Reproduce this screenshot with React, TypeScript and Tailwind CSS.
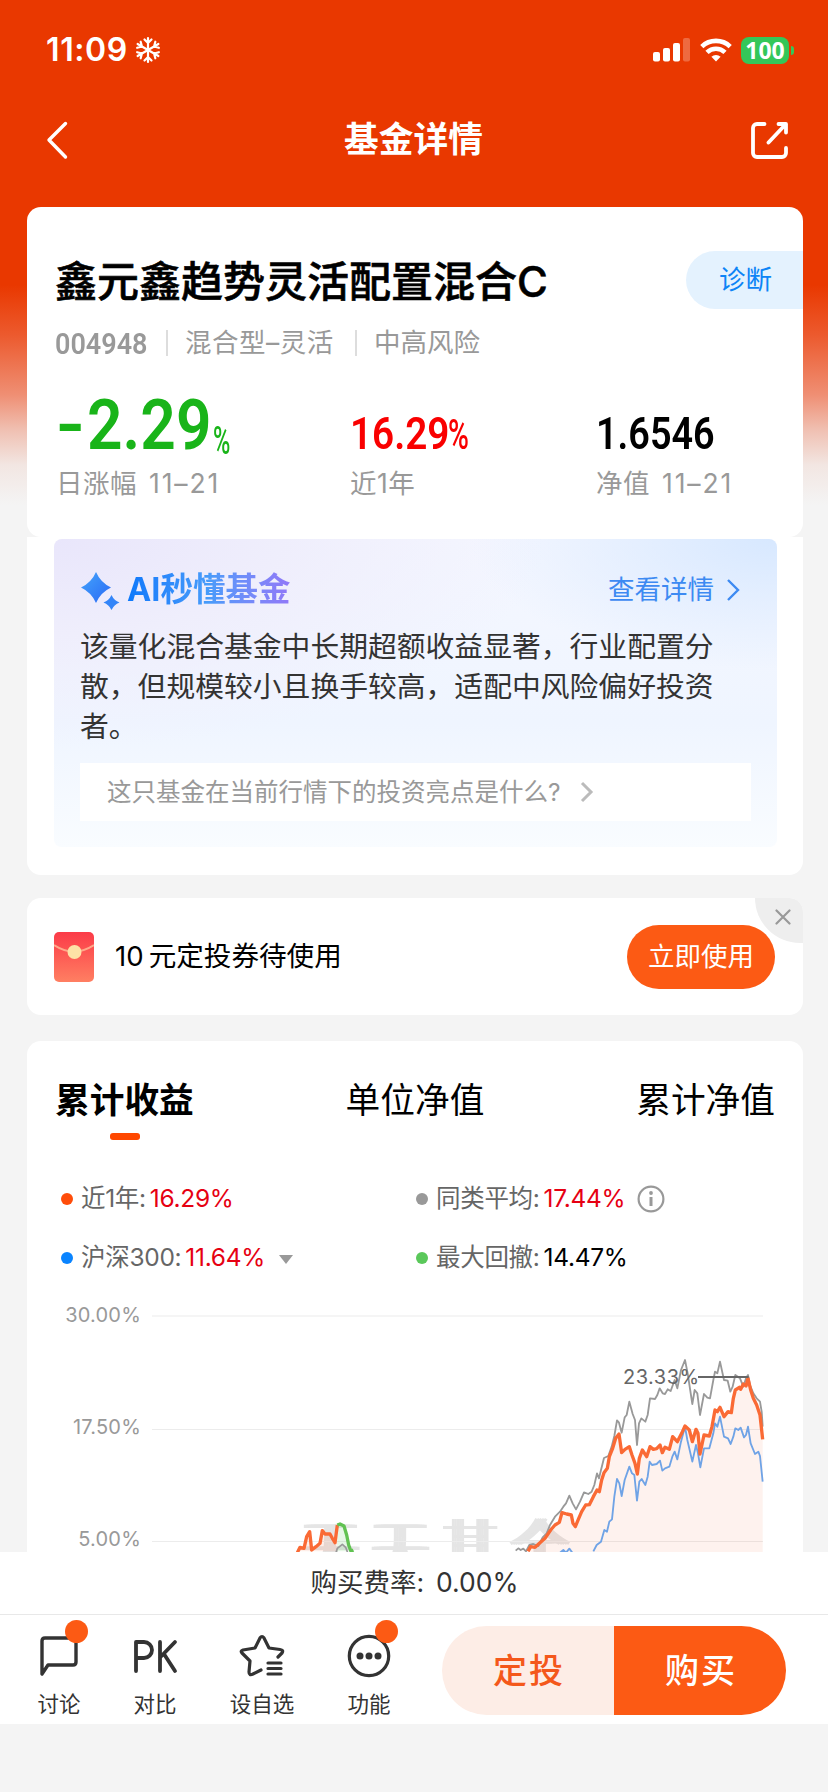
import type { ReactNode } from "react";

const CJK = "font-['Inter','Noto_Sans_CJK_SC',sans-serif]";
const DIN = "font-['Roboto','Noto_Sans_CJK_SC',sans-serif]";

const GRAY_LINE =
  "47,662 55,655 62,660 70,656 78,664 88,645 100,642 115,648 128,622 140,610 150,585 165,560 180,545 190,530 198,520 208,497 218,520 228,538 240,515 252,487 265,492 275,485 283,465 291,430 297,445 303,420 312,384 325,378 335,350 343,318 351,271 357,278 365,308 374,262 380,255 388,215 398,252 405,270 411,345 417,280 424,265 436,275 443,255 450,205 465,207 472,195 479,175 488,190 495,192 503,178 512,183 524,150 532,175 543,120 555,90 563,130 577,222 584,180 592,190 600,255 612,192 622,203 630,205 640,150 645,125 652,130 660,95 672,150 683,152 691,185 698,170 706,135 720,145 730,170 738,145 744,135 750,165 760,190 770,205 780,215 785,245 788,290";
const FUND_LINE =
  "84,664 92,650 105,652 120,638 135,625 152,600 165,585 178,577 186,548 200,552 214,555 219,580 226,590 235,568 245,545 257,525 268,524 280,500 291,480 298,485 305,450 312,428 322,415 328,380 338,355 347,325 357,312 365,368 375,358 388,350 396,375 405,400 412,432 418,385 427,360 440,380 450,350 460,358 470,356 480,345 487,368 495,352 508,358 518,320 532,335 545,310 555,288 568,300 577,335 588,298 594,310 600,372 612,315 628,318 636,290 645,240 652,245 660,232 672,260 684,245 694,248 700,205 706,180 718,172 722,178 730,162 738,168 744,145 752,180 760,205 770,225 780,255 788,328";
const INDEX_LINE =
  "280,664 290,645 303,635 313,600 321,605 328,575 336,568 343,500 351,447 358,460 365,498 374,450 388,410 396,430 403,435 411,512 418,455 425,447 436,465 443,440 449,395 456,405 470,402 480,392 487,422 495,415 508,410 517,380 524,365 532,388 543,335 555,290 562,330 577,395 588,345 594,370 601,412 612,355 628,355 640,310 645,280 652,290 660,260 672,320 684,325 692,342 700,320 706,295 715,300 722,293 732,322 738,315 744,290 752,340 765,372 775,365 780,378 788,455";

function StatusBar() {
  return (
    <div className="flex h-[100px] items-center pl-[46px] pr-[34px] text-white">
      <span className="text-[32px] font-semibold tracking-[0.6px]">11:09</span>
      <svg className="ml-[7px]" width="26" height="28" viewBox="-13 -14 26 28" fill="none" stroke="#fff" strokeWidth="2.2" strokeLinecap="round">
        {[0, 60, 120, 180, 240, 300].map((a) => (
          <path key={a} transform={`rotate(${a})`} d="M0 0V-12M-3.500-10.500L0-7L3.500-10.500" />
        ))}
      </svg>
      <svg className="ml-auto" width="38" height="24" viewBox="0 0 38 24" fill="#fff">
        <rect x="0" y="14" width="7" height="9.5" rx="2" />
        <rect x="10" y="10" width="7" height="13.5" rx="2" />
        <rect x="20" y="5" width="7" height="18.5" rx="2" />
        <rect x="30" y="0" width="7" height="23.5" rx="2" opacity=".25" />
      </svg>
      <svg className="ml-[9px]" width="32" height="24" viewBox="0 0 32 24" fill="none" stroke="#fff" strokeWidth="4.6">
        <path d="M1.8 8.6a20.5 20.5 0 0 1 28.4 0" />
        <path d="M7 14.4a13 13 0 0 1 18 0" />
        <path d="M16 23.6l-4.6-4.8a6.6 6.6 0 0 1 9.2 0z" fill="#fff" stroke="none" />
      </svg>
      <div className="ml-[9px] flex h-[27px] w-[48px] items-center justify-center rounded-[8px] bg-[#34c759] font-['Open_Sans',sans-serif] text-[23px] font-bold leading-none">100</div>
      <div className="ml-[2px] h-[9px] w-[3px] rounded-r-full bg-[#34c759]" />
    </div>
  );
}

function NavBar() {
  return (
    <div className="flex h-[107px] items-center justify-between pb-[28px] pl-[45px] pr-[40px]">
      <svg width="24" height="40" viewBox="0 0 24 40" fill="none" stroke="#fff" strokeWidth="3.4" strokeLinecap="round" strokeLinejoin="round">
        <path d="M20.500 3.500L4 20L20.500 37" />
      </svg>
      <h1 className="ml-[7px] text-[34.7px] font-bold leading-none text-white">基金详情</h1>
      <svg width="37" height="38" viewBox="0 0 37 38" fill="none" stroke="#fff" strokeWidth="3.8" strokeLinecap="round" strokeLinejoin="round">
        <path d="M13.500 3H6a4 4 0 0 0-4 4V32a4 4 0 0 0 4 4H31a4 4 0 0 0 4-4V27" />
        <path d="M27.500 3H35V11.500M34.500 3.500L17.500 21.500" />
      </svg>
    </div>
  );
}

function Stat({ className, label, date, children }: { className: string; label: string; date?: string; children: ReactNode }) {
  return (
    <div className={`shrink-0 ${className}`}>
      <div className={`flex h-[58px] items-end whitespace-nowrap ${DIN}`}>{children}</div>
      <div className="mt-[6px] whitespace-nowrap text-[26.5px] leading-[36px] tracking-[0.5px] text-[#999]">
        {label}
        {date && <span className="ml-[12px] tracking-[1.9px]">{date}</span>}
      </div>
    </div>
  );
}

function FundCard() {
  return (
    <section className="h-[330px] overflow-hidden rounded-[14px] bg-white pt-[44px]">
      <div className="flex h-[58px] items-center justify-between pl-[28px]">
        <h2 className="pt-[3px] text-[42px] font-medium leading-none text-black [-webkit-text-stroke:0.6px_#000]">鑫元鑫趋势灵活配置混合C</h2>
        <div className="flex h-[58px] w-[117px] items-center rounded-l-full bg-[#e4f2fe] pl-[33px] text-[26.5px] text-[#0d84f6]">诊断</div>
      </div>
      <div className="mt-[16px] flex h-[36px] items-center text-[26.5px] text-[#999]">
        <span className={`ml-[28px] w-[111px] origin-left scale-x-90 text-[30px] font-semibold ${DIN}`}>004948</span>
        <i className="h-[26px] w-[2px] bg-[#ddd]" />
        <span className="ml-[17px] w-[170px] tracking-[0.5px]">混合型–灵活</span>
        <i className="h-[26px] w-[2px] bg-[#ddd]" />
        <span className="ml-[17px]">中高风险</span>
      </div>
      <div className="mt-[40px] flex pl-[29px]">
        <Stat className="w-[294px]" label="日涨幅" date="11–21">
          <span className="w-[31px] origin-left scale-x-[1.12] text-[70px] font-semibold leading-[68px] text-[#19b419]">-</span>
          <span className="w-[126px] origin-left scale-x-[.89] text-[70px] font-semibold leading-[68px] text-[#19b419]">2.29</span>
          <span className="origin-left scale-x-[.62] text-[38px] font-medium leading-[36px] text-[#19b419]">%</span>
        </Stat>
        <Stat className="w-[246px]" label="近1年">
          <span className="w-[98px] origin-left scale-x-[.86] text-[45px] font-semibold leading-[50px] text-[#f90000]">16.29</span>
          <span className="origin-left scale-x-[.66] text-[43px] font-medium leading-[50px] text-[#f90000]">%</span>
        </Stat>
        <Stat className="" label="净值" date="11–21">
          <span className="origin-left scale-x-[.84] text-[45px] font-semibold leading-[50px] text-black">1.6546</span>
        </Stat>
      </div>
    </section>
  );
}

function AiCard() {
  return (
    <section className="h-[338px] rounded-b-[14px] bg-white pl-[27px] pr-[26px] pt-[2px]">
      <div className="h-[308px] rounded-[8px] bg-[radial-gradient(ellipse_at_100%_0%,#d7e8ff_0%,transparent_30%),radial-gradient(ellipse_at_0%_0%,#e9e6fb_0%,#efeefc_22%,transparent_48%),linear-gradient(180deg,#f5f7ff_0%,#eff5ff_60%,#f9fcff_100%)] px-[26px] pt-[32px]">
        <div className="flex h-[38px] items-center">
          <svg width="40" height="40" viewBox="0 0 40 40">
            <defs>
              <linearGradient id="spark" x1="0" y1="0" x2="1" y2="1">
                <stop offset="0" stopColor="#45a5fb" />
                <stop offset="1" stopColor="#2868f5" />
              </linearGradient>
            </defs>
            <path fill="url(#spark)" d="M16 2Q20.500 12.500 31 17.500Q20.500 22.500 16 33Q11.500 22.500 1 17.500Q11.500 12.500 16 2Z" />
            <path fill="#3385f8" d="M31.500 25Q34 30.500 39.500 32.500Q34 34.500 31.500 40Q29 34.500 23.500 32.500Q29 30.500 31.500 25Z" />
          </svg>
          <h3 className="ml-[7px] bg-gradient-to-r from-[#0a78fb] via-[#479bfa] to-[#9078f8] bg-clip-text text-[32.500px] font-bold leading-[38px] text-transparent">AI秒懂基金</h3>
          <span className="ml-auto text-[26.5px] text-[#3d8af2]">查看详情</span>
          <svg className="ml-[12px] mr-[11px]" width="14" height="24" viewBox="0 0 14 24" fill="none" stroke="#3d8af2" strokeWidth="2.4">
            <path d="M2 2L12 12L2 22" />
          </svg>
        </div>
        <p className="mt-[18px] w-[645px] text-[28.8px] leading-[40px] text-[#333]">该量化混合基金中长期超额收益显著，行业配置分散，但规模较小且换手较高，适配中风险偏好投资者。</p>
        <div className="mt-[16px] flex h-[58px] items-center bg-white pl-[27px] text-[24.5px] text-[#999]">
          这只基金在当前行情下的投资亮点是什么?
          <svg className="ml-[19px]" width="14" height="22" viewBox="0 0 14 22" fill="none" stroke="#bbb" strokeWidth="3">
            <path d="M2 2L11 11L2 20" />
          </svg>
        </div>
      </div>
    </section>
  );
}

function CouponCard() {
  return (
    <section className="relative mt-[23px] flex h-[117px] items-center overflow-hidden rounded-[14px] bg-white pl-[27px] pr-[28px]">
      <svg width="40" height="50" viewBox="0 0 40 50">
        <defs>
          <linearGradient id="packet" x1="0" y1="0" x2="0" y2="1">
            <stop offset="0" stopColor="#fb3b48" />
            <stop offset="1" stopColor="#ff7f62" />
          </linearGradient>
        </defs>
        <rect width="40" height="50" rx="5" fill="url(#packet)" />
        <path d="M0 13Q20 26 40 13" fill="none" stroke="#ffa98a" strokeWidth="2" />
        <circle cx="20.500" cy="20" r="7" fill="#fde2a6" />
      </svg>
      <span className="ml-[21px] text-[27.600px] text-black">10<span className="ml-[5px]">元定投券待使用</span></span>
      <button className="ml-auto h-[64px] w-[148px] rounded-full bg-[#fc5a14] text-[26.5px] text-white">立即使用</button>
      <div className="absolute right-0 top-0 h-[45px] w-[48px] rounded-bl-[48px] bg-[#eee]">
        <svg className="ml-[20px] mt-[11px]" width="16" height="16" viewBox="0 0 16 16" stroke="#999" strokeWidth="2.200" strokeLinecap="round">
          <path d="M1.500 1.500L14.500 14.500M14.500 1.500L1.500 14.500" />
        </svg>
      </div>
    </section>
  );
}

function Legend({ dot, label, value, valueColor, extra }: { dot: string; label: string; value: string; valueColor: string; extra?: ReactNode }) {
  return (
    <div className="flex h-[59px] items-center text-[24.5px]">
      <i className={`mr-[8px] size-[12px] rounded-full ${dot}`} />
      <span className="tracking-[-0.3px] text-[#666]">{label}</span>
      <span className={`ml-[4px] tracking-[-0.3px] ${valueColor}`}>{value}</span>
      {extra}
    </div>
  );
}

function Chart() {
  return (
    <div className="relative mt-[13px] flex h-[252px]">
      {/* brand watermark behind the lines */}
      <div className="absolute left-[276px] top-[213px] origin-left scale-x-[.8] whitespace-nowrap font-['Noto_Sans_CJK_SC',sans-serif] text-[69px] font-light leading-[69px] tracking-[18.2px] text-[#e5e5e5] [text-shadow:6px_0_#e5e5e5,-6px_0_#e5e5e5,3px_0_#e5e5e5,-3px_0_#e5e5e5]">天天基金</div>
      <div className="w-[114px] text-right text-[20px] leading-[30px] tracking-[0.2px] text-[#999]">
        <div>30.00%</div>
        <div className="mt-[82px]">17.50%</div>
        <div className="mt-[82px]">5.00%</div>
      </div>
      <svg className="relative ml-[11px]" width="620" height="252" viewBox="0 0 620 252" fill="none">
        <path d="M0 16H611M0 129.500H611M0 241.500H611" stroke="#ececec" strokeWidth="1.200" />
        <g transform="translate(128 30) scale(.33333)" strokeLinejoin="round">
          <path d="M52 664L60 652L72 655L80 620L89 605L95 660L108 650L120 640L127 602L135 612L150 612L157 625L165 638L172 585V664Z" fill="#ff5a1f" fillOpacity=".1" />
          <path d="M172 664V585L180 582L192 588L200 615L213 664Z" fill="#55c855" fillOpacity=".15" />
          <path d="M168 668L172 655L187 643L197 652L203 668" stroke="#999" strokeWidth="5" />
          <path d="M52 668L60 652L72 655L80 620L89 605L95 660L108 650L120 640L127 602L135 612L150 612L157 625L165 638L172 585" stroke="#fa6a35" strokeWidth="10" />
          <path d="M172 585L180 582L192 588L200 615L206 645L213 664L220 660" stroke="#61c252" strokeWidth="10" />
        </g>
        <g transform="translate(348 30) scale(.33333)" strokeLinejoin="round">
          <polygon points={`${FUND_LINE} 788,670 84,670`} fill="#f2592a" fillOpacity=".08" />
          <polyline points={GRAY_LINE} stroke="#999" strokeWidth="5.500" />
          <path d="M180 668L190 660L198 668L208 656L217 668" stroke="#6fa3e6" strokeWidth="5.500" />
          <polyline points={INDEX_LINE} stroke="#6fa3e6" strokeWidth="5.500" />
          <polyline points={FUND_LINE} stroke="#fa6a35" strokeWidth="10" />
          <path d="M594 141H746" stroke="#666" strokeWidth="6" />
        </g>
        <text x="471" y="84" className="font-['Inter',sans-serif]" fontSize="20" letterSpacing=".5" fill="#666">23.33%</text>
      </svg>
    </div>
  );
}

function PerformanceCard() {
  return (
    <section className="mt-[26px] h-[511px] overflow-hidden rounded-t-[14px] bg-white">
      <div className="flex justify-between px-[28px] pt-[33px] text-[34.7px] leading-[52px] text-black">
        <span className="font-bold">累计收益</span>
        <span>单位净值</span>
        <span>累计净值</span>
      </div>
      <div className="ml-[83px] mt-[7px] h-[7px] w-[30px] rounded-[3px] bg-[#ff4800]" />
      <div className="mt-[29px] grid grid-cols-[355px_1fr] pl-[34px]">
        <Legend dot="bg-[#ff4d0a]" label="近1年:" value="16.29%" valueColor="text-[#e60012]" />
        <Legend
          dot="bg-[#999]"
          label="同类平均:"
          value="17.44%"
          valueColor="text-[#e60012]"
          extra={
            <svg className="ml-[12px]" width="28" height="28" viewBox="0 0 28 28" fill="none" stroke="#999" strokeWidth="2.200">
              <circle cx="14" cy="14" r="12.400" />
              <path d="M14 12V21" strokeWidth="3" />
              <circle cx="14" cy="8" r="1.900" fill="#999" stroke="none" />
            </svg>
          }
        />
        <Legend
          dot="bg-[#0a84ff]"
          label="沪深300:"
          value="11.64%"
          valueColor="text-[#e60012]"
          extra={
            <svg className="ml-[14px] mt-[4px]" width="14" height="9" viewBox="0 0 14 9" fill="#999">
              <path d="M0 0H14L7 9Z" />
            </svg>
          }
        />
        <Legend dot="bg-[#5ac85a]" label="最大回撤:" value="14.47%" valueColor="text-black" />
      </div>
      <Chart />
    </section>
  );
}

function Tool({ className, label, badge, children }: { className: string; label: string; badge?: boolean; children: ReactNode }) {
  return (
    <div className={`flex flex-col items-center ${className}`}>
      <div className="relative flex h-[46px] w-[46px] items-center justify-center">
        {children}
        {badge && <i className="absolute -right-[6px] -top-[13px] size-[23px] rounded-full bg-[#fc5a14]" />}
      </div>
      <span className="mt-[9px] whitespace-nowrap text-[21.500px] leading-[32px] text-[#333]">{label}</span>
    </div>
  );
}

function BottomBar() {
  return (
    <footer className="h-[172px] bg-white">
      <div className="flex h-[63px] items-center justify-center border-b border-[#e8e8e8] text-[26.5px] text-[#333]">
        <span className="ml-px">购买费率:</span>
        <span className="ml-[12px]">0.00%</span>
      </div>
      <div className="flex h-[109px] pt-[18px]">
        <Tool className="ml-[36px] w-[46px]" label="讨论" badge>
          <svg width="40" height="42" viewBox="0 0 40 42" fill="none" stroke="#333" strokeWidth="3.400" strokeLinejoin="round">
            <path d="M3 39V6Q3 3 6 3H34Q37 3 37 6V27Q37 30 34 30H9Z" />
          </svg>
        </Tool>
        <Tool className="ml-[50px] w-[46px]" label="对比">
          <svg width="46" height="40" viewBox="0 0 46 40" fill="none" stroke="#333" strokeWidth="3.800" strokeLinecap="round" strokeLinejoin="round">
            <path d="M4 35V6H12A8 8 0 0 1 12 22H4M28 6V35M43 6L28 21.500M32 18L43 35" />
          </svg>
        </Tool>
        <Tool className="ml-[61px] w-[46px]" label="设自选">
          <svg width="46" height="44" viewBox="0 0 46 44" fill="none" stroke="#333" strokeWidth="3.200" strokeLinecap="round" strokeLinejoin="round">
            <path d="M39 23L43 19Q45 16 41 15.500L30 14L25 4Q23 1 21 4L16 14L4 16Q1 17 3 19L11 27L10 38Q10 42 14 40L22 36" />
            <path d="M29 29H42M29 34.500H42M29 40H42" />
          </svg>
        </Tool>
        <Tool className="ml-[61px] w-[46px]" label="功能" badge>
          <svg width="44" height="44" viewBox="0 0 44 44" fill="none" stroke="#333" strokeWidth="3.200">
            <circle cx="22" cy="22" r="19.700" />
            <g fill="#333" stroke="none">
              <circle cx="13" cy="22" r="3.500" />
              <circle cx="22" cy="22" r="3.500" />
              <circle cx="31" cy="22" r="3.500" />
            </g>
          </svg>
        </Tool>
        <div className="-mt-[7px] ml-[50px] flex h-[89px] w-[344px] overflow-hidden rounded-full text-[34px] font-medium tracking-[2px]">
          <button className="flex-1 bg-[#fdede6] pl-[2px] text-[#f4581b]">定投</button>
          <button className="flex-1 bg-[#fc5a14] pl-[2px] text-white">购买</button>
        </div>
      </div>
    </footer>
  );
}

export default function App() {
  return (
    <div className={`min-h-[1792px] w-[828px] bg-[#f4f4f4] bg-[linear-gradient(180deg,#e93800_0px,#e93800_285px,#ec5a2e_335px,#ef8f74_395px,#f0c0b2_430px,#f2e6e2_465px,#f4f4f4_505px)] ${CJK}`}>
      <StatusBar />
      <NavBar />
      <main className="pl-[27px] pr-[25px]">
        <FundCard />
        <AiCard />
        <CouponCard />
        <PerformanceCard />
      </main>
      <BottomBar />
    </div>
  );
}
